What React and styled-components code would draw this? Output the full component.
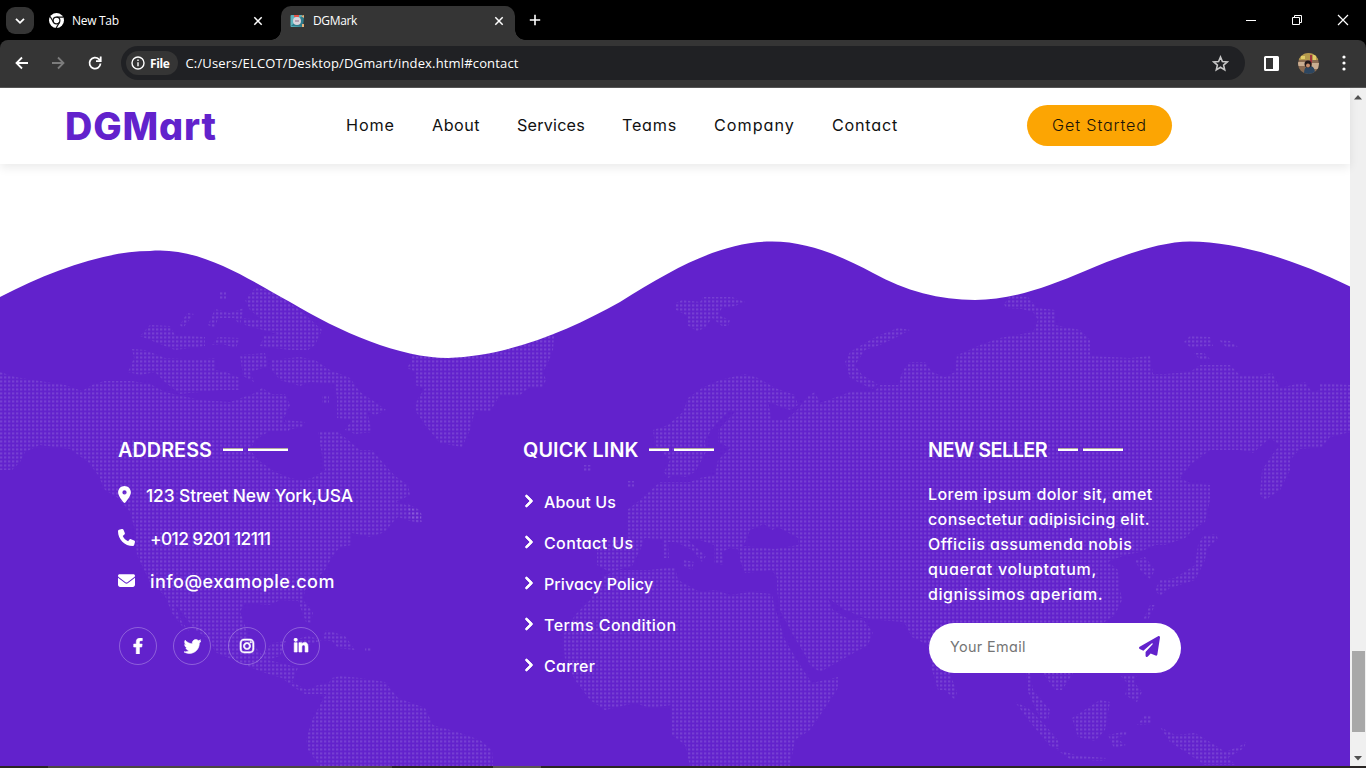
import React from 'react';
import styled, { createGlobalStyle } from 'styled-components';
import {
  FaLocationDot, FaPhone, FaEnvelope, FaTwitter,
  FaInstagram, FaLinkedinIn, FaPaperPlane, FaAngleRight,
} from 'react-icons/fa6';
import { FaFacebookF } from 'react-icons/fa';

const PURPLE = '#6222cc';

const GlobalStyle = createGlobalStyle`
  * { box-sizing: border-box; }
  body { margin: 0; background: #fff; overflow: hidden; }
  button, input { font: inherit; border: 0; background: none; padding: 0; }
  ul { list-style: none; margin: 0; padding: 0; }
  svg { display: block; flex: none; }
`;

const Window = styled.div`
  display: flex;
  flex-direction: column;
  width: 1366px;
  height: 768px;
  overflow: hidden;
  font-family: Inter, 'Liberation Sans', sans-serif;
  font-feature-settings: 'cv11';
`;

const Label = styled.span`
  letter-spacing: ${(p) => p.$ls || 0}px;
  white-space: nowrap;
`;

/* browser frame */
const TabStrip = styled.div`
  display: flex;
  height: 40px;
  padding: 6px 0 0 6px;
  background: #000;
  color: #fff;
  font: 12px 'Open Sans', sans-serif;
`;
const TabSearch = styled.div`
  display: grid;
  place-items: center;
  width: 28px;
  height: 27px;
  margin-top: 1px;
  border-radius: 9px;
  background: #353535;
`;
const Tab = styled.div`
  position: relative;
  display: flex;
  align-items: center;
  width: ${(p) => p.$w}px;
  height: 34px;
  margin-right: ${(p) => p.$mr || 0}px;
  padding: 0 11px 5px ${(p) => p.$pl}px;
  gap: 8px;
  border-radius: 10px 10px 0 0;
  background: ${(p) => (p.$active ? '#353535' : 'transparent')};
  &::before, &::after {
    content: '';
    display: ${(p) => (p.$active ? 'block' : 'none')};
    position: absolute;
    bottom: 0;
    width: 10px;
    height: 10px;
  }
  &::before { left: -10px; background: radial-gradient(circle at 0 0, transparent 9.5px, #353535 10px); }
  &::after { right: -10px; background: radial-gradient(circle at 100% 0, transparent 9.5px, #353535 10px); }
  > svg:last-child { margin-left: auto; }
`;
const NewTab = styled.div`
  padding: 8px 0 0 14px;
`;
const WindowButtons = styled.div`
  display: flex;
  gap: 34px;
  margin: 8px 17px 0 auto;
`;
const ToolbarWrap = styled.div`
  height: 48px;
  background: #000;
`;
const Toolbar = styled.div`
  display: flex;
  align-items: center;
  height: 48px;
  padding: 0 20px 1px 14px;
  border-bottom: 1px solid #565656;
  border-radius: 8px 8px 0 0;
  background: #353535;
`;
const NavIcons = styled.div`
  display: flex;
  gap: 20px;
  margin-right: 17px;
`;
const AddressBar = styled.div`
  display: flex;
  align-items: center;
  width: 1124px;
  height: 34px;
  padding: 0 16px 0 5px;
  border-radius: 17px;
  background: #202124;
  color: #fff;
  font: 13px 'Open Sans', sans-serif;
  > svg { margin-left: auto; }
`;
const Chip = styled.div`
  display: flex;
  align-items: center;
  gap: 5px;
  width: 52px;
  height: 24px;
  margin-right: 7.5px;
  padding-left: 5px;
  border-radius: 12px;
  background: #353535;
  font-size: 12px;
  font-weight: 700;
`;
const ToolIcons = styled.div`
  display: flex;
  align-items: center;
  margin-left: auto;
`;
const Avatar = styled.div`
  width: 21px;
  height: 21px;
  margin: 0 23px 0 19px;
  border-radius: 50%;
  overflow: hidden;
`;

/* page */
const Viewport = styled.div`
  display: flex;
  height: 678px;
`;
const Page = styled.div`
  display: flex;
  flex-direction: column;
  width: 1350px;
`;
const Header = styled.header`
  position: relative;
  z-index: 1;
  display: flex;
  align-items: center;
  height: 76px;
  padding: 0 0 2px 65px;
  background: #fff;
  box-shadow: 0 4px 9px rgba(0, 0, 0, 0.08);
`;
const Logo = styled.a`
  width: 281px;
  padding-top: 2px;
  color: ${PURPLE};
  font-size: 37.8px;
  font-weight: 800;
  line-height: 50px;
`;
const Menu = styled.nav`
  display: flex;
  gap: 37px;
  width: 681px;
  font-size: 16.2px;
  color: #111;
`;
const MenuItem = styled.a`
  width: ${(p) => p.$w}px;
`;
const StartButton = styled.button`
  width: 145px;
  height: 41px;
  border-radius: 21px;
  background: #fca503;
  color: #1a1408;
  font-size: 16.2px;
  font-weight: 300;
`;
const Footer = styled.footer`
  position: relative;
  flex: 1;
  background: ${PURPLE};
`;
const Backdrop = styled.svg`
  position: absolute;
  inset: 0;
`;
const Columns = styled.div`
  position: relative;
  display: grid;
  grid-template-columns: 405px 405px 1fr;
  padding: 272px 0 0 118px;
  color: #fff;
`;
const Heading = styled.h3`
  display: flex;
  align-items: center;
  height: 28px;
  margin: 0 0 ${(p) => p.$mb}px;
  font-size: 19.8px;
  font-weight: 600;
`;
const HeadingText = styled(Label)`
  width: ${(p) => p.$w}px;
`;
const Dash = styled.i`
  width: ${(p) => p.$w}px;
  height: 3px;
  margin: -1px 5px 0 0;
  border-top: 1px solid #b3aaa0;
  background: #fff;
`;
const ContactRow = styled.li`
  display: flex;
  align-items: center;
  gap: 15px;
  height: 43px;
  font-size: ${(p) => p.$size || 17.4}px;
  font-weight: 500;
  svg { margin-top: -2px; }
`;
const PinIcon = styled(FaLocationDot)`
  width: 13px;
  height: 17px;
`;
const Socials = styled.div`
  display: flex;
  gap: 16.4px;
  margin: 24px 0 0 1px;
`;
const Social = styled.a`
  display: grid;
  place-items: center;
  width: 38px;
  height: 38px;
  border: 1px solid rgba(255, 255, 255, 0.28);
  border-radius: 50%;
  svg { stroke-width: 20px; }
`;
const LinkRow = styled.li`
  display: flex;
  align-items: center;
  gap: 10px;
  height: 41px;
  font-size: 16px;
  font-weight: 500;
`;
const Chevron = styled(FaAngleRight)`
  width: 11px;
  height: 16px;
  margin-top: -1px;
  stroke-width: 28px;
`;
const Blurb = styled.p`
  display: flex;
  flex-direction: column;
  margin: 0 0 16px;
  font-size: 16px;
  font-weight: 500;
  line-height: 25px;
`;
const Subscribe = styled.form`
  display: flex;
  align-items: center;
  width: 252px;
  height: 50px;
  margin-left: 1px;
  padding: 0 21px 3px 21px;
  border-radius: 25px;
  background: #fff;
  color: ${PURPLE};
`;
const EmailInput = styled.input`
  flex: 1;
  width: 100px;
  outline: 0;
  font-size: 14.4px;
  letter-spacing: 0.35px;
  &::placeholder { color: #757575; opacity: 1; }
`;
const Scrollbar = styled.div`
  display: flex;
  flex-direction: column;
  justify-content: space-between;
  align-items: center;
  width: 16px;
  padding: 7px 0 5px;
  background: #f0f0f0;
`;
const Thumb = styled.div`
  width: 13px;
  height: 81px;
  margin: 551px 0 auto 1px;
  background: #a8a8a8;
`;
const Taskbar = styled.div`
  display: flex;
  height: 2px;
  padding-left: 48px;
  gap: 101px;
  background: #2a2624;
`;
const TaskItem = styled.div`
  width: ${(p) => p.$w}px;
  background: ${(p) => p.$c};
`;

const LAND = [
  // North America
  '0,372 15,377 40,381 65,385 82,391 92,385 104,381 132,381 150,384 165,392 200,400 230,402 255,393 262,388 272,394 285,394 290,405 283,420 290,432 268,432 255,440 250,450 258,460 275,472 290,478 302,480 312,478 325,470 322,455 318,432 338,432 348,440 360,450 372,450 385,465 395,476 408,485 410,495 396,502 404,504 422,514 420,523 410,521 398,517 392,523 385,532 370,537 352,533 352,545 340,547 332,557 325,570 305,590 303,600 313,612 311,623 306,622 298,601 280,600 270,605 245,603 240,612 245,625 248,638 262,655 272,643 286,641 280,656 268,660 285,664 298,668 292,682 307,690 318,685 328,684 332,678 340,676 360,678 385,682 398,698 425,708 433,725 457,732 480,740 492,750 493,766 320,766 308,750 306,740 312,720 320,705 326,694 305,694 292,686 282,678 262,672 238,662 215,652 210,640 195,630 180,610 174,604 182,622 190,632 182,626 172,613 165,596 150,582 137,555 135,530 130,512 118,498 105,490 98,475 88,462 70,449 40,445 25,452 20,462 12,470 0,470',
  '128,372 134,358 132,349 145,350 165,358 200,360 215,358 215,370 226,372 240,378 240,390 220,390 180,394 165,382 155,372 140,375',
  '140,336 150,325 170,326 175,335 205,337 205,346 175,350 155,342', '180,325 187,313 194,314 183,328',
  '208,325 215,309 230,313 244,308 240,325 234,318 218,318 215,328', '212,345 218,337 240,338 236,348 222,344',
  '245,300 255,288 270,290 300,310 322,330 315,345 308,350 290,350 260,346 264,336 278,334 245,325 242,318 262,320 250,310',
  '220,292 226,292 226,299 220,299', '240,355 265,353 268,366 250,372 254,382 243,376',
  '272,360 300,357 315,360 330,370 350,378 360,392 375,402 386,410 375,415 367,411 372,432 355,434 345,430 352,420 337,418 337,398 335,384 310,382 300,386 280,380 270,368',
  '285,420 305,422 302,427 288,430', '322,396 329,396 329,404 322,404', '326,630 345,636 355,650 338,648 332,641 322,640', '365,648 371,648 371,652 365,652', '294,640 308,636 322,640 306,646',
  // Greenland, Iceland, Svalbard
  '408,345 555,325 553,350 550,358 543,372 546,380 542,388 530,387 520,395 500,395 490,412 475,410 470,430 462,447 440,443 425,425 415,410 417,400 425,388 415,385 416,372 407,368 412,360',
  '676,303 682,300 700,302 703,297 732,297 745,302 735,306 722,308 718,315 730,320 728,326 722,326 712,318 705,328 697,331 687,325 688,316 676,310',
  '584,465 591,465 591,471 584,471', '628,481 634,481 634,487 628,487', '408,504 420,510 422,522 410,520',
  // Eurasia
  '653,430 668,425 683,412 688,398 702,388 720,380 745,374 758,378 775,388 795,395 798,405 790,410 768,402 772,420 786,420 797,410 808,396 815,392 820,403 850,392 875,391 880,385 898,385 903,370 910,362 925,362 932,372 945,377 955,372 957,355 965,352 980,345 1000,338 1033,332 1038,320 1033,312 1022,309 1006,308 1004,304 1010,296 1028,297 1037,308 1055,310 1055,325 1080,330 1090,340 1090,356 1130,358 1150,356 1153,374 1165,374 1190,372 1200,365 1230,365 1240,375 1260,375 1272,373 1280,388 1305,382 1312,392 1320,390 1320,383 1350,385 1350,432 1330,437 1322,447 1300,449 1290,460 1290,470 1280,490 1265,500 1260,495 1262,470 1272,455 1280,445 1270,438 1253,453 1240,450 1210,450 1190,465 1180,478 1190,483 1210,485 1210,500 1205,522 1195,528 1185,538 1165,545 1155,545 1140,552 1125,555 1108,562 1118,570 1120,590 1122,600 1115,615 1100,625 1085,628 1078,660 1072,675 1062,690 1055,690 1043,673 1030,673 1033,690 1050,710 1048,720 1040,718 1028,692 1025,665 955,660 950,674 957,692 955,700 945,690 938,690 932,670 928,645 912,637 904,622 880,620 865,618 845,610 828,598 833,610 850,620 862,618 873,632 868,645 850,655 820,672 810,665 805,655 793,635 780,610 777,590 777,578 772,570 755,572 745,573 740,560 738,550 745,546 775,549 798,545 798,538 778,527 772,530 764,524 750,530 742,550 730,548 722,552 724,565 714,563 714,545 700,540 688,540 706,556 702,562 692,550 676,542 668,542 669,558 664,558 664,540 645,538 640,550 632,566 610,572 597,565 597,540 625,540 628,535 627,510 640,500 660,482 690,482 700,478 715,475 718,460 730,448 718,442 718,430 735,412 730,410 715,425 705,440 706,452 695,472 685,477 675,475 668,478 664,472 670,460 655,445',
  '845,362 850,352 870,340 880,335 898,328 910,330 895,338 880,345 865,350 855,365 862,375 878,384 872,389 850,378',
  '1184,342 1190,336 1210,337 1213,346 1190,347', '1219,340 1230,341 1238,347 1226,347', '1194,353 1204,353 1210,359 1200,360', '684,560 694,562 692,570 684,566',
  // Africa
  '563,635 575,615 590,600 605,575 620,570 650,570 675,567 678,580 700,592 715,590 730,595 750,592 772,594 774,605 785,640 800,665 812,683 838,677 838,688 825,708 810,730 795,740 790,766 690,766 685,745 672,735 672,705 650,708 635,703 605,710 590,700 575,680 565,660',
  // East Asia islands
  '1155,590 1160,580 1175,578 1195,565 1198,545 1203,536 1216,534 1218,539 1207,548 1205,560 1195,580 1170,588 1160,596', '1135,560 1145,557 1155,570 1150,579 1140,570', '1150,605 1155,605 1148,620 1143,620',
  '1015,702 1028,708 1045,725 1058,740 1060,750 1050,746 1030,722', '1072,718 1100,700 1110,702 1105,730 1095,741 1078,737', '1057,750 1080,756 1106,758 1104,761 1070,759', '1108,735 1127,731 1126,735 1116,738 1126,745 1114,748', '1120,675 1137,675 1134,682 1142,692 1137,702 1125,695 1128,684', '1145,715 1151,715 1151,724 1137,725',
  '1160,727 1175,735 1195,733 1215,745 1225,752 1240,746 1246,742 1244,748 1228,758 1236,765 1205,765 1190,755 1170,742',
];

function WorldWave() {
  return (
    <Backdrop width="1350" height="602" viewBox="0 164 1350 602" aria-hidden="true">
      <defs>
        <pattern id="dots" width="4" height="4" patternUnits="userSpaceOnUse">
          <rect x="0" y="0.4" width="2.3" height="2.1" fill="#fff" fillOpacity="0.13" />
        </pattern>
      </defs>
      {LAND.map((points) => <polygon key={points} points={points} fill="url(#dots)" />)}
      <path
        fill="#fff"
        d="M0 164V297C50 271 105 251 150 251C200 246 250 280 290 302C340 332 400 358 448 358C510 356 570 330 620 302C680 264 725 241.500 772 241.500C810 241.500 845 258 873 273C905 291 940 300 975 300C1010 300 1045 288 1085 271C1120 256 1160 241.500 1190 241.500C1240 241.500 1300 262 1350 286.500V164Z"
      />
    </Backdrop>
  );
}

const stroke = { fill: 'none', stroke: '#fff', strokeWidth: 1.8 };

function Close() {
  return <svg width="10" height="10" viewBox="0 0 10 10" {...stroke} strokeWidth="1.5"><path d="M1.3 1.3l7.4 7.4M8.7 1.3L1.3 8.7" /></svg>;
}

function Browser() {
  return (
    <>
      <TabStrip>
        <TabSearch><svg width="10" height="8" viewBox="0 0 10 8" {...stroke}><path d="M1 1.8l4 4 4-4" /></svg></TabSearch>
        <Tab $w={240} $pl={15} $mr={7}>
          <svg width="15" height="15" viewBox="0 0 16 16">
            <circle cx="8" cy="8" r="8" fill="#fff" />
            <circle cx="8" cy="8" r="3.6" fill="#fff" stroke="#111" strokeWidth="1.3" />
            <path d="M8 4.3h7.3M4.8 9.9L1.2 3.7M11.2 9.9L7.6 16" stroke="#111" strokeWidth="1.3" />
          </svg>
          <Label $ls={-0.3}>New Tab</Label>
          <Close />
        </Tab>
        <Tab $active $w={234} $pl={9}>
          <svg width="15" height="14" viewBox="0 0 15 14">
            <rect x="0.5" y="1" width="12" height="12" rx="1" fill="#5cb3bd" />
            <path d="M1 12L12 2l2 1-1 10z" fill="#2f7c8c" />
            <circle cx="7" cy="7" r="4" fill="#d9d4dc" /><path d="M4 1h5v2H4z" fill="#e4574c" />
            <path d="M11 2l3-1v3zM12 10h2v3h-2z" fill="#e9b07a" /><path d="M5 7h4" stroke="#8b6d86" />
          </svg>
          <Label $ls={-0.35}>DGMark</Label>
          <Close />
        </Tab>
        <NewTab><svg width="12" height="12" viewBox="0 0 12 12" {...stroke} strokeWidth="1.6"><path d="M6 .8v10.4M.8 6h10.4" /></svg></NewTab>
        <WindowButtons>
          <svg width="12" height="12" viewBox="0 0 12 12" {...stroke} strokeWidth="1"><path d="M1 6.5h10" /></svg>
          <svg width="12" height="12" viewBox="0 0 12 12" {...stroke} strokeWidth="1"><path d="M1.5 3.5h7v7h-7zM3.5 3V1.500h7v7H9" /></svg>
          <svg width="12" height="12" viewBox="0 0 12 12" {...stroke} strokeWidth="1.2"><path d="M1 1l10 10M11 1L1 11" /></svg>
        </WindowButtons>
      </TabStrip>
      <ToolbarWrap>
        <Toolbar>
          <NavIcons>
            <svg width="16" height="16" viewBox="0 0 16 16" {...stroke}><path d="M14 8H3M8 2.500L2.500 8 8 13.500" /></svg>
            <svg width="16" height="16" viewBox="0 0 16 16" {...stroke} stroke="#7c7c7c"><path d="M2 8h11M8 2.500L13.500 8 8 13.500" /></svg>
            <svg width="18" height="16" viewBox="0 0 18 16" {...stroke}><path d="M14.500 8.500a5.500 5.500 0 1 1-1.600-4.300L14 5.500" /><path d="M14.700 1.500v4.700H10" /></svg>
          </NavIcons>
          <AddressBar>
            <Chip>
              <svg width="14" height="14" viewBox="0 0 14 14" {...stroke} strokeWidth="1.4"><circle cx="7" cy="7" r="6" /><path d="M7 6.200v4M7 3.600v1.500" /></svg>
              <Label $ls={-0.4}>File</Label>
            </Chip>
            <Label $ls={0.16}>C:/Users/ELCOT/Desktop/DGmart/index.html#contact</Label>
            <svg width="17" height="17" viewBox="0 0 17 17" fill="none" stroke="#c7c7c7" strokeWidth="1.6"><path d="M8.500 2l1.900 4.500 4.900.4-3.700 3.200 1.100 4.800-4.200-2.600-4.200 2.600 1.100-4.800L1.700 6.900l4.900-.4z" /></svg>
          </AddressBar>
          <ToolIcons>
            <svg width="15" height="15" viewBox="0 0 15 15"><path fillRule="evenodd" fill="#fff" d="M1.500 0h12A1.500 1.500 0 0 1 15 1.500v12a1.500 1.500 0 0 1-1.500 1.500h-12A1.500 1.500 0 0 1 0 13.500v-12A1.500 1.500 0 0 1 1.500 0zM2 2v11h7V2z" /></svg>
            <Avatar>
              <svg width="21" height="21" viewBox="0 0 21 21">
                <rect width="21" height="21" fill="#8a6b52" /><path d="M0 0h21v7H0z" fill="#b49a4d" />
                <path d="M3 3h4v3H3zM15 2h3v5h-3z" fill="#e0cc68" /><path d="M12 2h2v8h-2z" fill="#a3363d" />
                <path d="M0 9h7v4H0zM14 10h7v6h-7z" fill="#c9ad91" /><path d="M6 21c0-6 2-8 6-8s5 4 5 8z" fill="#2d4660" />
                <circle cx="10" cy="11" r="3.500" fill="#22181a" /><circle cx="10" cy="12.500" r="2" fill="#c98d6b" />
              </svg>
            </Avatar>
            <svg width="4" height="16" viewBox="0 0 4 16" fill="#fff"><circle cx="2" cy="2" r="1.600" /><circle cx="2" cy="8" r="1.600" /><circle cx="2" cy="14" r="1.600" /></svg>
          </ToolIcons>
        </Toolbar>
      </ToolbarWrap>
    </>
  );
}

const MENU = [
  ['Home', 49, 0.9], ['About', 48, 0.46], ['Services', 68, 0.19],
  ['Teams', 55, 0.74], ['Company', 81, 1], ['Contact', 66, 0.76],
];
const LINKS = [
  ['About Us', 0.17], ['Contact Us', 0.38], ['Privacy Policy', 0.1],
  ['Terms Condition', 0.45], ['Carrer', 0.3],
];
const BLURB = [
  ['Lorem ipsum dolor sit, amet', 0.44], ['consectetur adipisicing elit.', 0.37],
  ['Officiis assumenda nobis', 0.43], ['quaerat voluptatum,', 0.7], ['dignissimos aperiam.', 0.55],
];

function Title({ text, w, ls, mb }) {
  return (
    <Heading $mb={mb}>
      <HeadingText $w={w} $ls={ls}>{text}</HeadingText>
      <Dash $w={20} /><Dash $w={40} />
    </Heading>
  );
}

export default function App() {
  return (
    <Window>
      <GlobalStyle />
      <Browser />
      <Viewport>
        <Page>
          <Header>
            <Logo><Label $ls={0.85}>DGMart</Label></Logo>
            <Menu>{MENU.map(([t, w, ls]) => <MenuItem key={t} $w={w}><Label $ls={ls}>{t}</Label></MenuItem>)}</Menu>
            <StartButton><Label $ls={0.86}>Get Started</Label></StartButton>
          </Header>
          <Footer>
            <WorldWave />
            <Columns>
              <section>
                <Title text="ADDRESS" w={105} ls={0.06} mb={10} />
                <ul>
                  <ContactRow><PinIcon /><Label $ls={-0.11}>123 Street New York,USA</Label></ContactRow>
                  <ContactRow><FaPhone size={17} /><Label $ls={-0.62}>+012 9201 12111</Label></ContactRow>
                  <ContactRow $size={18}><FaEnvelope size={17} /><Label $ls={0.46}>info@examople.com</Label></ContactRow>
                </ul>
                <Socials>
                  <Social><FaFacebookF size={16} stroke="currentColor" /></Social>
                  <Social><FaTwitter size={17} /></Social>
                  <Social><FaInstagram size={16} stroke="currentColor" /></Social>
                  <Social><FaLinkedinIn size={16} stroke="currentColor" /></Social>
                </Socials>
              </section>
              <section>
                <Title text="QUICK LINK" w={126} ls={0.12} mb={17} />
                <ul>
                  {LINKS.map(([t, ls]) => (
                    <LinkRow key={t}><Chevron stroke="currentColor" /><Label $ls={ls}>{t}</Label></LinkRow>
                  ))}
                </ul>
              </section>
              <section>
                <Title text="NEW SELLER" w={130} ls={-0.5} mb={18} />
                <Blurb>{BLURB.map(([t, ls]) => <Label key={t} $ls={ls}>{t}</Label>)}</Blurb>
                <Subscribe><EmailInput placeholder="Your Email" /><FaPaperPlane size={21} /></Subscribe>
              </section>
            </Columns>
          </Footer>
        </Page>
        <Scrollbar>
          <svg width="8" height="5" viewBox="0 0 8 5" fill="#505050"><path d="M4 0l4 4.500H0z" /></svg>
          <Thumb />
          <svg width="8" height="5" viewBox="0 0 8 5" fill="#505050"><path d="M4 4.500L8 0H0z" /></svg>
        </Scrollbar>
      </Viewport>
      <Taskbar><TaskItem $w={344} $c="#4b4643" /><TaskItem $w={48} $c="#5a5552" /></Taskbar>
    </Window>
  );
}
